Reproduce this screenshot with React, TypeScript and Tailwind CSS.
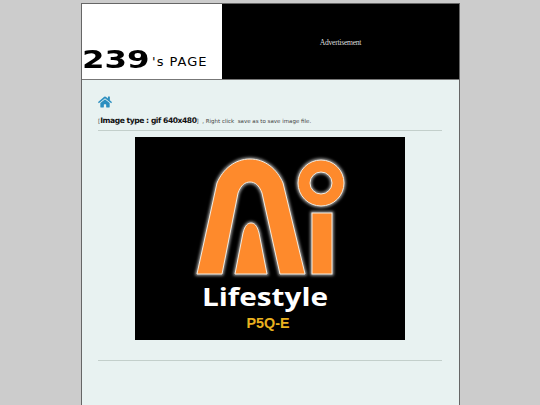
import { FaHome } from 'react-icons/fa';

const archPath =
  'M62 137 L82 46 C88 32 100 22 115 22 C130 22 142 32 148 46 L170 137 L145 137 L127 56 C124 48 120 45 115 45 C110 45 106 48 103 56 L87 137 Z';
const conePath = 'M100 137 L108 96 C110 88 113 86 116 86 C119 86 122 88 124 96 L132 137 Z';

const AiLogo = () => (
  <svg viewBox="0 0 270 203" className="block w-[270px] h-[203px]">
    <defs>
      <filter id="glow" x="-10%" y="-10%" width="120%" height="120%">
        <feGaussianBlur stdDeviation="1.6" />
      </filter>
    </defs>
    <rect width="270" height="203" fill="#000" />
    <g>
      {/* halo under the shapes */}
      <g fill="none" stroke="#ffffff" strokeOpacity="0.7" strokeWidth="3" filter="url(#glow)">
        <path d={archPath} />
        <path d={conePath} />
        <rect x="177" y="76" width="20" height="61" />
        <circle cx="186" cy="46" r="23" />
        <circle cx="186" cy="46" r="11" />
      </g>
      <g fill="#fe8a2c" stroke="#f4ece0" strokeWidth="1">
        <path d={archPath} />
        <path d={conePath} />
        <rect x="177" y="76" width="20" height="61" />
        <path fillRule="evenodd" d="M163 46 a23 23 0 1 0 46 0 a23 23 0 1 0 -46 0 Z M175 46 a11 11 0 1 1 22 0 a11 11 0 1 1 -22 0 Z" />
      </g>
    </g>
    <text
      x="130"
      y="169"
      textAnchor="middle"
      textLength="126"
      lengthAdjust="spacingAndGlyphs"
      fill="#fff"
      fontSize="25"
      fontWeight="700"
      fontFamily="'Open Sans', sans-serif"
    >
      Lifestyle
    </text>
    <text
      x="133"
      y="191"
      textAnchor="middle"
      textLength="43"
      lengthAdjust="spacingAndGlyphs"
      fill="#e9b11f"
      fontSize="15"
      fontWeight="700"
      fontFamily="'Liberation Sans', sans-serif"
    >
      P5Q-E
    </text>
  </svg>
);

export default function App() {
  return (
    <div className="h-[405px] overflow-hidden bg-[#cccccc] pt-[3px]">
      <div className="ml-[81px] w-[379px] h-[410px] border border-[#666666] bg-[#e8f2f1]">
        {/* Header */}
        <div className="flex h-[76px] border-b border-[#777777]">
          <div className="flex w-[140px] items-end overflow-hidden bg-white pb-[10px] leading-none text-black">
            <span className="whitespace-nowrap font-['DejaVu_Sans'] text-[24px] font-bold leading-[18px] origin-bottom-left scale-x-[1.35]">
              239
            </span>
            <span className="ml-[20px] whitespace-nowrap font-['DejaVu_Sans'] text-[13px] leading-[14px] tracking-[1px]">
              's PAGE
            </span>
          </div>
          <div className="flex flex-1 items-center justify-center bg-black pt-[3px]">
            <span className="font-['Liberation_Serif',serif] text-[7.6px] tracking-[-0.25px] text-[#dddddd]">Advertisement</span>
          </div>
        </div>

        {/* Content */}
        <div className="flex flex-col pl-[16px] pr-[17px]">
          <FaHome className="mt-[15px] text-[14px] text-[#2c8fc0]" />
          <p className="mt-[6px] h-[11px] whitespace-nowrap font-['DejaVu_Sans',sans-serif] text-[5.5px] leading-[11px] text-[#444444]">
            [<b className="text-[7.6px] tracking-[-0.45px] text-[#111111]">Image type : gif 640x480</b>] &nbsp;, Right click &nbsp;save as to save image file.
          </p>
          <div className="mt-[4px] h-px bg-[#c3cfcb]" />
          <div className="mt-[6px] flex justify-center">
            <AiLogo />
          </div>
          <div className="mt-[20px] h-px bg-[#c3cfcb]" />
        </div>
      </div>
    </div>
  );
}
